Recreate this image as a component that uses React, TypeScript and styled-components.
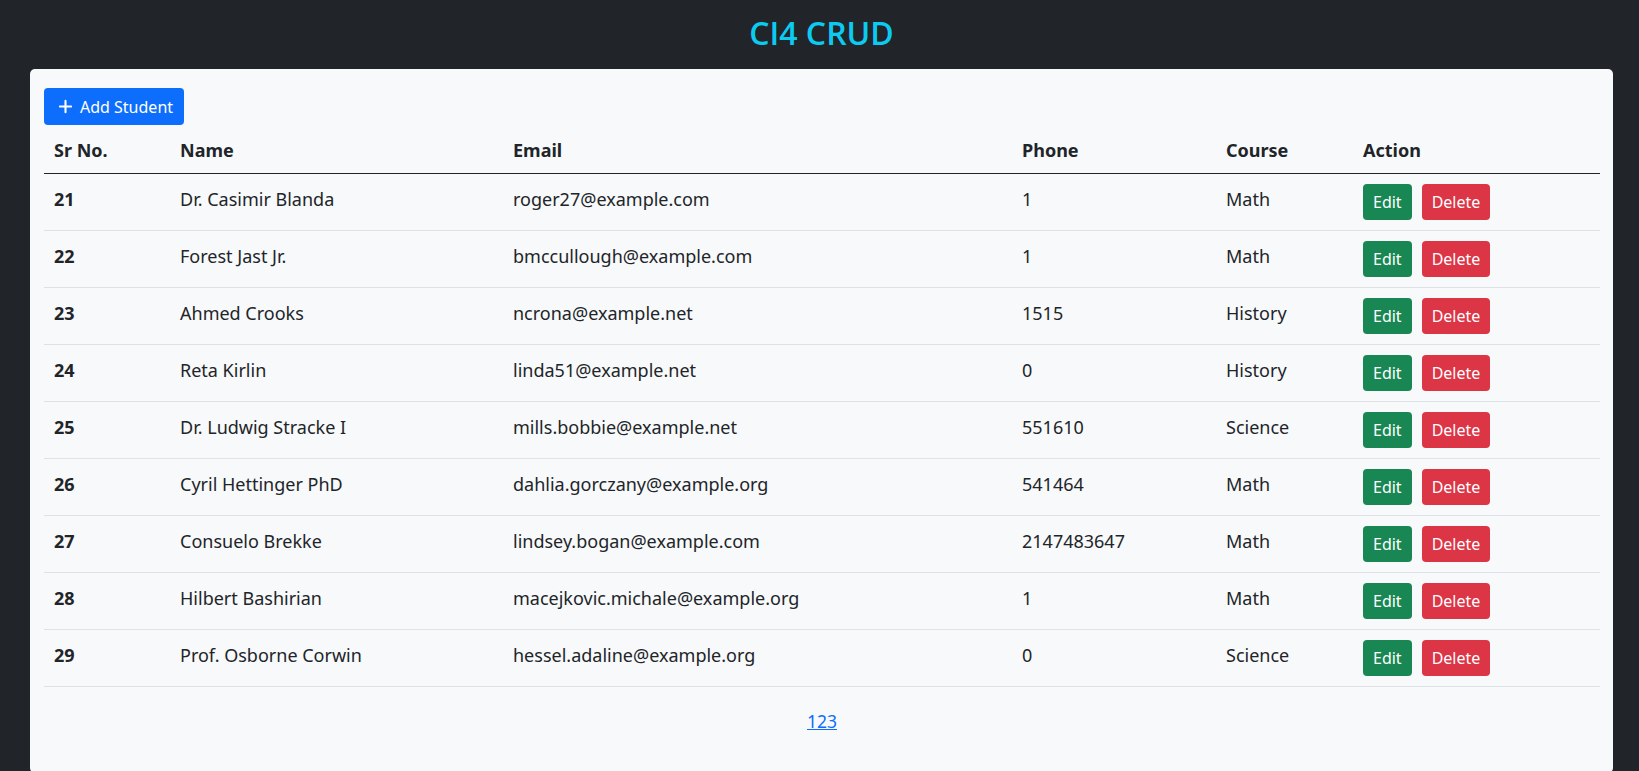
import React from "react";
import styled, { createGlobalStyle } from "styled-components";

type Student = {
  id: number;
  name: string;
  email: string;
  phone: string;
  course: string;
};

const students: Student[] = [
  { id: 21, name: "Dr. Casimir Blanda", email: "roger27@example.com", phone: "1", course: "Math" },
  { id: 22, name: "Forest Jast Jr.", email: "bmccullough@example.com", phone: "1", course: "Math" },
  { id: 23, name: "Ahmed Crooks", email: "ncrona@example.net", phone: "1515", course: "History" },
  { id: 24, name: "Reta Kirlin", email: "linda51@example.net", phone: "0", course: "History" },
  { id: 25, name: "Dr. Ludwig Stracke I", email: "mills.bobbie@example.net", phone: "551610", course: "Science" },
  { id: 26, name: "Cyril Hettinger PhD", email: "dahlia.gorczany@example.org", phone: "541464", course: "Math" },
  { id: 27, name: "Consuelo Brekke", email: "lindsey.bogan@example.com", phone: "2147483647", course: "Math" },
  { id: 28, name: "Hilbert Bashirian", email: "macejkovic.michale@example.org", phone: "1", course: "Math" },
  { id: 29, name: "Prof. Osborne Corwin", email: "hessel.adaline@example.org", phone: "0", course: "Science" },
];

const columns = [
  { label: "Sr No.", width: 126 },
  { label: "Name", width: 333 },
  { label: "Email", width: 509 },
  { label: "Phone", width: 204 },
  { label: "Course", width: 137 },
  { label: "Action", width: 247 },
];

const GlobalStyle = createGlobalStyle`
  * { box-sizing: border-box; }
  body {
    margin: 0;
    background: #212529;
    font-family: "Noto Sans", "Open Sans", sans-serif;
    color: #212529;
  }
`;

const App = () => {
  return (
    <>
      <GlobalStyle />
      <Page>
        <Title>CI4 CRUD</Title>
        <Card>
          <AddButton type="button">
            <PlusIcon viewBox="0 0 16 16">
              <path d="M8 2v12M2 8h12" />
            </PlusIcon>
            Add Student
          </AddButton>
          <Table>
            <colgroup>
              {columns.map((c) => (
                <col key={c.label} style={{ width: c.width }} />
              ))}
            </colgroup>
            <thead>
              <tr>
                {columns.map((c) => (
                  <HeadCell key={c.label}>{c.label}</HeadCell>
                ))}
              </tr>
            </thead>
            <tbody>
              {students.map((s) => (
                <tr key={s.id}>
                  <Cell bold>{s.id}</Cell>
                  <Cell>{s.name}</Cell>
                  <Cell>{s.email}</Cell>
                  <Cell>{s.phone}</Cell>
                  <Cell>{s.course}</Cell>
                  <Cell>
                    <Actions>
                      <SmallButton variant="edit">Edit</SmallButton>
                      <SmallButton variant="delete">Delete</SmallButton>
                    </Actions>
                  </Cell>
                </tr>
              ))}
            </tbody>
          </Table>
          <Pager>
            <PageLink href="#">123</PageLink>
          </Pager>
        </Card>
      </Page>
    </>
  );
};

export default App;

const Page = styled.div`
  display: flex;
  flex-direction: column;
  min-height: 100vh;
`;

const Title = styled.h1`
  margin: 0;
  height: 69px;
  display: flex;
  align-items: center;
  justify-content: center;
  padding: 0 0 5px 4px;
  font-family: "Open Sans", "Noto Sans", sans-serif;
  font-size: 32px;
  font-weight: 600;
  color: #0dcaf0;
`;

const Card = styled.div`
  flex: 1;
  margin: 0 26px 0 30px;
  padding: 19px 13px 40px 14px;
  background: #f8f9fa;
  border-radius: 5px;
`;

const AddButton = styled.button`
  display: inline-flex;
  align-items: center;
  gap: 7px;
  height: 37px;
  padding: 0 11px 0 14px;
  border: none;
  border-radius: 4px;
  background: #0d6efd;
  color: #fff;
  font-family: "Noto Sans", sans-serif;
  font-size: 16px;
  cursor: pointer;
`;

const PlusIcon = styled.svg`
  width: 15px;
  height: 15px;
  fill: none;
  stroke: #fff;
  stroke-width: 2.2;
  stroke-linecap: round;
`;

const Table = styled.table`
  width: 100%;
  border-collapse: collapse;
  table-layout: fixed;
`;

const HeadCell = styled.th`
  height: 48px;
  padding: 3px 10px 0;
  text-align: left;
  font-size: 18px;
  font-weight: 700;
  border-bottom: 1px solid #212529;
`;

const Cell = styled.td<{ bold?: boolean }>`
  height: 57px;
  padding: 0 10px 6px;
  font-size: 18px;
  font-weight: ${({ bold }) => (bold ? 700 : 400)};
  border-bottom: 1px solid #dee2e6;
  white-space: nowrap;
`;

const Actions = styled.div`
  display: flex;
  gap: 10px;
  padding-top: 6px;
`;

const SmallButton = styled.button<{ variant: "edit" | "delete" }>`
  height: 36px;
  padding: 0 10px;
  border: none;
  border-radius: 4px;
  background: ${({ variant }) => (variant === "edit" ? "#198754" : "#dc3545")};
  color: #fff;
  font-family: "Noto Sans", sans-serif;
  font-size: 16px;
  cursor: pointer;
`;

const Pager = styled.div`
  display: flex;
  justify-content: center;
  padding-top: 22px;
`;

const PageLink = styled.a`
  color: #0d6efd;
  font-size: 17.5px;
  text-decoration: underline;
`;
